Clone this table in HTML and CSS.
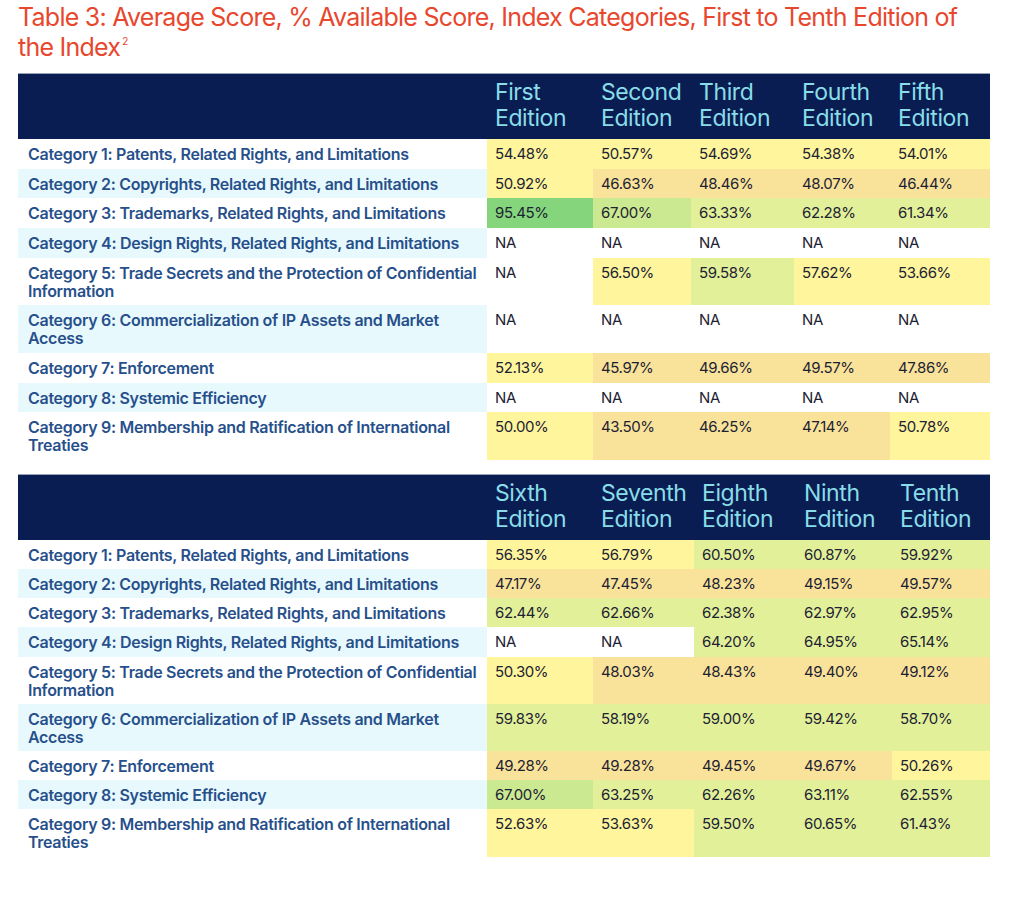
FILE: index.html
```html
<!DOCTYPE html>
<html lang="en">
<head>
<meta charset="utf-8">
<title>Table 3</title>
<link rel="stylesheet" href="styles.css">
</head>
<body>
<div class="page">
  <h1 class="title">Table 3: Average Score, % Available Score, Index Categories, First to Tenth Edition of the Index<sup class="fn">2</sup></h1>

  <table class="scores t1">
    <colgroup>
      <col class="c-label"><col style="width:106px"><col style="width:98px"><col style="width:103px"><col style="width:96px"><col style="width:100px">
    </colgroup>
    <thead>
      <tr><th class="blank"></th><th>First<br>Edition</th><th>Second<br>Edition</th><th>Third<br>Edition</th><th>Fourth<br>Edition</th><th>Fifth<br>Edition</th></tr>
    </thead>
    <tbody>
      <tr><td class="lab">Category 1: Patents, Related Rights, and Limitations</td><td class="y">54.48%</td><td class="y">50.57%</td><td class="y">54.69%</td><td class="y">54.38%</td><td class="y">54.01%</td></tr>
      <tr><td class="lab alt">Category 2: Copyrights, Related Rights, and Limitations</td><td class="y">50.92%</td><td class="p">46.63%</td><td class="p">48.46%</td><td class="p">48.07%</td><td class="p">46.44%</td></tr>
      <tr><td class="lab">Category 3: Trademarks, Related Rights, and Limitations</td><td class="g3">95.45%</td><td class="g2">67.00%</td><td class="g1">63.33%</td><td class="g1">62.28%</td><td class="g1">61.34%</td></tr>
      <tr><td class="lab alt">Category 4: Design Rights, Related Rights, and Limitations</td><td>NA</td><td>NA</td><td>NA</td><td>NA</td><td>NA</td></tr>
      <tr><td class="lab">Category 5: Trade Secrets and the Protection of Confidential Information</td><td>NA</td><td class="y">56.50%</td><td class="g1">59.58%</td><td class="y">57.62%</td><td class="y">53.66%</td></tr>
      <tr><td class="lab alt">Category 6: Commercialization of IP Assets and Market Access</td><td>NA</td><td>NA</td><td>NA</td><td>NA</td><td>NA</td></tr>
      <tr><td class="lab">Category 7: Enforcement</td><td class="y">52.13%</td><td class="p">45.97%</td><td class="p">49.66%</td><td class="p">49.57%</td><td class="p">47.86%</td></tr>
      <tr><td class="lab alt">Category 8: Systemic Efficiency</td><td>NA</td><td>NA</td><td>NA</td><td>NA</td><td>NA</td></tr>
      <tr><td class="lab">Category 9: Membership and Ratification of International Treaties</td><td class="y">50.00%</td><td class="p">43.50%</td><td class="p">46.25%</td><td class="p">47.14%</td><td class="y">50.78%</td></tr>
    </tbody>
  </table>

  <table class="scores t2">
    <colgroup>
      <col class="c-label"><col style="width:106px"><col style="width:101px"><col style="width:102px"><col style="width:96px"><col style="width:98px">
    </colgroup>
    <thead>
      <tr><th class="blank"></th><th>Sixth<br>Edition</th><th>Seventh<br>Edition</th><th>Eighth<br>Edition</th><th>Ninth<br>Edition</th><th>Tenth<br>Edition</th></tr>
    </thead>
    <tbody>
      <tr><td class="lab">Category 1: Patents, Related Rights, and Limitations</td><td class="y">56.35%</td><td class="y">56.79%</td><td class="g1">60.50%</td><td class="g1">60.87%</td><td class="g1">59.92%</td></tr>
      <tr><td class="lab alt">Category 2: Copyrights, Related Rights, and Limitations</td><td class="p">47.17%</td><td class="p">47.45%</td><td class="p">48.23%</td><td class="p">49.15%</td><td class="p">49.57%</td></tr>
      <tr><td class="lab">Category 3: Trademarks, Related Rights, and Limitations</td><td class="g1">62.44%</td><td class="g1">62.66%</td><td class="g1">62.38%</td><td class="g1">62.97%</td><td class="g1">62.95%</td></tr>
      <tr><td class="lab alt">Category 4: Design Rights, Related Rights, and Limitations</td><td>NA</td><td>NA</td><td class="g1">64.20%</td><td class="g1">64.95%</td><td class="g1">65.14%</td></tr>
      <tr><td class="lab">Category 5: Trade Secrets and the Protection of Confidential Information</td><td class="y">50.30%</td><td class="p">48.03%</td><td class="p">48.43%</td><td class="p">49.40%</td><td class="p">49.12%</td></tr>
      <tr><td class="lab alt">Category 6: Commercialization of IP Assets and Market Access</td><td class="g1">59.83%</td><td class="g1">58.19%</td><td class="g1">59.00%</td><td class="g1">59.42%</td><td class="g1">58.70%</td></tr>
      <tr><td class="lab">Category 7: Enforcement</td><td class="p">49.28%</td><td class="p">49.28%</td><td class="p">49.45%</td><td class="p">49.67%</td><td class="y">50.26%</td></tr>
      <tr><td class="lab alt">Category 8: Systemic Efficiency</td><td class="g2">67.00%</td><td class="g1">63.25%</td><td class="g1">62.26%</td><td class="g1">63.11%</td><td class="g1">62.55%</td></tr>
      <tr><td class="lab">Category 9: Membership and Ratification of International Treaties</td><td class="y">52.63%</td><td class="y">53.63%</td><td class="g1">59.50%</td><td class="g1">60.65%</td><td class="g1">61.43%</td></tr>
    </tbody>
  </table>
</div>
</body>
</html>
```

FILE: styles.css
```css
html, body {
  margin: 0;
  padding: 0;
  background: #ffffff;
}

.page {
  padding: 2px 18px 0 18px;
  width: 972px;
  font-family: Inter, "Liberation Sans", Arial, sans-serif;
}

.title {
  margin: 0 0 11px 0;
  font-size: 25px;
  line-height: 30px;
  font-weight: 400;
  letter-spacing: -0.75px;
  color: #e8472e;
}

.fn {
  font-size: 10px;
  line-height: 0;
  vertical-align: 0;
  position: relative;
  top: -11px;
  margin-left: 2px;
  letter-spacing: 0;
}

.scores {
  width: 972px;
  border-collapse: collapse;
  table-layout: fixed;
}

.t2 {
  margin-top: 14px;
}

.c-label {
  width: 469px;
}

.scores thead th {
  background: #0a1d52;
  color: #88dde9;
  font-size: 23px;
  line-height: 26px;
  font-weight: 400;
  text-align: left;
  vertical-align: top;
  padding: 5px 2px 8px 8px;
  letter-spacing: -0.4px;
  border-top: 1px solid #98a1ba;
  white-space: nowrap;
}

.scores td {
  padding: 6px 4px 5.67px 8px;
  font-size: 15px;
  line-height: 18px;
  vertical-align: top;
  color: #1d2232;
  letter-spacing: -0.4px;
}

.t2 td {
  padding-bottom: 5.2px;
}

.scores td.lab {
  padding-left: 10px;
  padding-right: 6px;
  font-size: 16px;
  color: #27508b;
  font-weight: 600;
  letter-spacing: -0.3px;
}

.scores td.alt {
  background: #e8f9fd;
}

.y { background: #fef59c; }
.p { background: #f9e29a; }
.g1 { background: #e3f09a; }
.g2 { background: #cbe991; }
.g3 { background: #84d57c; }
```
